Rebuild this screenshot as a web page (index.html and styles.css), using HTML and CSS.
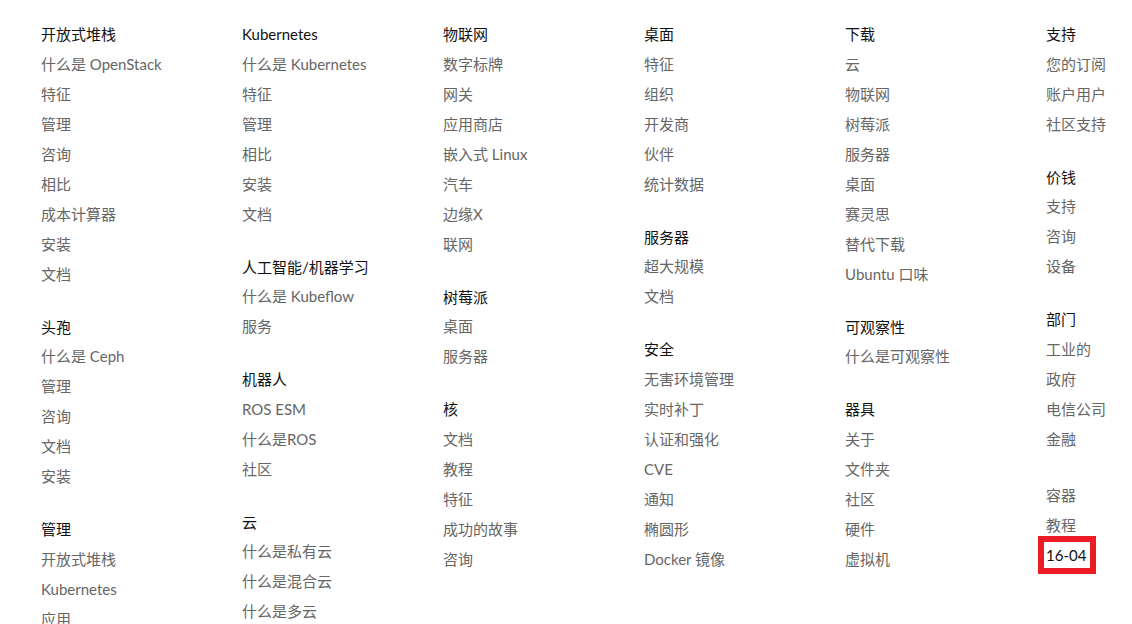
FILE: index.html
```html
<!DOCTYPE html>
<html lang="zh">
<head>
<meta charset="utf-8">
<title>Footer</title>
<link rel="stylesheet" href="styles.css">
</head>
<body>
<nav class="sitemap">
  <div class="col">
    <section class="sec">
      <h2 class="head">开放式堆栈</h2>
      <ul class="links">
        <li><a href="#">什么是 OpenStack</a></li>
        <li><a href="#">特征</a></li>
        <li><a href="#">管理</a></li>
        <li><a href="#">咨询</a></li>
        <li><a href="#">相比</a></li>
        <li><a href="#">成本计算器</a></li>
        <li><a href="#">安装</a></li>
        <li><a href="#">文档</a></li>
      </ul>
    </section>
    <section class="sec">
      <h2 class="head">头孢</h2>
      <ul class="links">
        <li><a href="#">什么是 Ceph</a></li>
        <li><a href="#">管理</a></li>
        <li><a href="#">咨询</a></li>
        <li><a href="#">文档</a></li>
        <li><a href="#">安装</a></li>
      </ul>
    </section>
    <section class="sec">
      <h2 class="head">管理</h2>
      <ul class="links">
        <li><a href="#">开放式堆栈</a></li>
        <li><a href="#">Kubernetes</a></li>
        <li><a href="#">应用</a></li>
        <li><a href="#">咨询</a></li>
      </ul>
    </section>
  </div>
  <div class="col">
    <section class="sec">
      <h2 class="head">Kubernetes</h2>
      <ul class="links">
        <li><a href="#">什么是 Kubernetes</a></li>
        <li><a href="#">特征</a></li>
        <li><a href="#">管理</a></li>
        <li><a href="#">相比</a></li>
        <li><a href="#">安装</a></li>
        <li><a href="#">文档</a></li>
      </ul>
    </section>
    <section class="sec">
      <h2 class="head">人工智能/机器学习</h2>
      <ul class="links">
        <li><a href="#">什么是 Kubeflow</a></li>
        <li><a href="#">服务</a></li>
      </ul>
    </section>
    <section class="sec">
      <h2 class="head">机器人</h2>
      <ul class="links">
        <li><a href="#">ROS ESM</a></li>
        <li><a href="#">什么是ROS</a></li>
        <li><a href="#">社区</a></li>
      </ul>
    </section>
    <section class="sec">
      <h2 class="head">云</h2>
      <ul class="links">
        <li><a href="#">什么是私有云</a></li>
        <li><a href="#">什么是混合云</a></li>
        <li><a href="#">什么是多云</a></li>
      </ul>
    </section>
  </div>
  <div class="col">
    <section class="sec">
      <h2 class="head">物联网</h2>
      <ul class="links">
        <li><a href="#">数字标牌</a></li>
        <li><a href="#">网关</a></li>
        <li><a href="#">应用商店</a></li>
        <li><a href="#">嵌入式 Linux</a></li>
        <li><a href="#">汽车</a></li>
        <li><a href="#">边缘X</a></li>
        <li><a href="#">联网</a></li>
      </ul>
    </section>
    <section class="sec">
      <h2 class="head">树莓派</h2>
      <ul class="links">
        <li><a href="#">桌面</a></li>
        <li><a href="#">服务器</a></li>
      </ul>
    </section>
    <section class="sec">
      <h2 class="head">核</h2>
      <ul class="links">
        <li><a href="#">文档</a></li>
        <li><a href="#">教程</a></li>
        <li><a href="#">特征</a></li>
        <li><a href="#">成功的故事</a></li>
        <li><a href="#">咨询</a></li>
      </ul>
    </section>
  </div>
  <div class="col">
    <section class="sec">
      <h2 class="head">桌面</h2>
      <ul class="links">
        <li><a href="#">特征</a></li>
        <li><a href="#">组织</a></li>
        <li><a href="#">开发商</a></li>
        <li><a href="#">伙伴</a></li>
        <li><a href="#">统计数据</a></li>
      </ul>
    </section>
    <section class="sec">
      <h2 class="head">服务器</h2>
      <ul class="links">
        <li><a href="#">超大规模</a></li>
        <li><a href="#">文档</a></li>
      </ul>
    </section>
    <section class="sec">
      <h2 class="head">安全</h2>
      <ul class="links">
        <li><a href="#">无害环境管理</a></li>
        <li><a href="#">实时补丁</a></li>
        <li><a href="#">认证和强化</a></li>
        <li><a href="#">CVE</a></li>
        <li><a href="#">通知</a></li>
        <li><a href="#">椭圆形</a></li>
        <li><a href="#">Docker 镜像</a></li>
      </ul>
    </section>
  </div>
  <div class="col">
    <section class="sec">
      <h2 class="head">下载</h2>
      <ul class="links">
        <li><a href="#">云</a></li>
        <li><a href="#">物联网</a></li>
        <li><a href="#">树莓派</a></li>
        <li><a href="#">服务器</a></li>
        <li><a href="#">桌面</a></li>
        <li><a href="#">赛灵思</a></li>
        <li><a href="#">替代下载</a></li>
        <li><a href="#">Ubuntu 口味</a></li>
      </ul>
    </section>
    <section class="sec">
      <h2 class="head">可观察性</h2>
      <ul class="links">
        <li><a href="#">什么是可观察性</a></li>
      </ul>
    </section>
    <section class="sec">
      <h2 class="head">器具</h2>
      <ul class="links">
        <li><a href="#">关于</a></li>
        <li><a href="#">文件夹</a></li>
        <li><a href="#">社区</a></li>
        <li><a href="#">硬件</a></li>
        <li><a href="#">虚拟机</a></li>
      </ul>
    </section>
  </div>
  <div class="col">
    <section class="sec">
      <h2 class="head">支持</h2>
      <ul class="links">
        <li><a href="#">您的订阅</a></li>
        <li><a href="#">账户用户</a></li>
        <li><a href="#">社区支持</a></li>
      </ul>
    </section>
    <section class="sec">
      <h2 class="head">价钱</h2>
      <ul class="links">
        <li><a href="#">支持</a></li>
        <li><a href="#">咨询</a></li>
        <li><a href="#">设备</a></li>
      </ul>
    </section>
    <section class="sec">
      <h2 class="head">部门</h2>
      <ul class="links">
        <li><a href="#">工业的</a></li>
        <li><a href="#">政府</a></li>
        <li><a href="#">电信公司</a></li>
        <li><a href="#">金融</a></li>
      </ul>
    </section>
    <section class="sec sec-untitled">
      <ul class="links">
        <li><a href="#">容器</a></li>
        <li><a href="#">教程</a></li>
        <li><a href="#" class="focused">16-04</a></li>
      </ul>
    </section>
  </div>
</nav>
</body>
</html>
```
FILE: styles.css
```css
html, body {
  margin: 0;
  padding: 0;
  background: #ffffff;
  overflow: hidden;
}
body {
  font-family: "Lato", "Noto Sans CJK SC", sans-serif;
  font-size: 15px;
  line-height: 30px;
  color: #111111;
}
.sitemap {
  display: grid;
  grid-template-columns: repeat(6, 201px);
  padding: 19px 0 0 41px;
  width: max-content;
}
.col {
  display: flex;
  flex-direction: column;
  gap: 23px;
}
.head {
  margin: 0;
  height: 29.5px;
  font-size: 15px;
  font-weight: 400;
  line-height: 30px;
  color: #111111;
}
.links {
  list-style: none;
  margin: 0;
  padding: 0;
}
.links li {
  line-height: 30px;
  height: 30px;
}
.links a {
  color: #666666;
  font-weight: 400;
  text-decoration: none;
}
.sec-untitled {
  margin-top: 3.5px;
}
.links a.focused {
  display: inline-block;
  vertical-align: top;
  color: #111111;
  height: 26px;
  line-height: 26px;
  margin: 2px 0 0 -2px;
  padding: 0 4px 0 2px;
  outline: 6px solid #ec1c24;
}
```
